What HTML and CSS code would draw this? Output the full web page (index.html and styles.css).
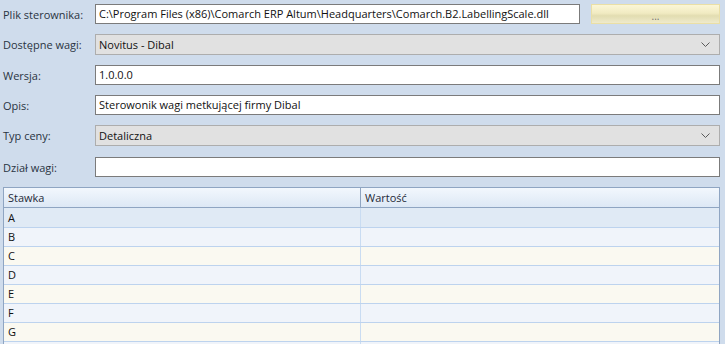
FILE: index.html
```html
<!DOCTYPE html>
<html lang="pl">
<head>
<meta charset="utf-8">
<link rel="stylesheet" href="styles.css">
</head>
<body>
<div class="form">
  <div class="row r1">
    <label class="lbl">Plik sterownika:</label>
    <div class="pair">
      <div class="input file">C:\Program Files (x86)\Comarch ERP Altum\Headquarters\Comarch.B2.LabellingScale.dll</div>
      <div class="btn">...</div>
    </div>
  </div>
  <div class="row r2">
    <label class="lbl">Dostępne wagi:</label>
    <div class="select"><span>Novitus - Dibal</span><svg class="chev" width="9" height="5" viewBox="0 0 9 5"><path d="M0.5 0.5 L4.5 4.5 L8.5 0.5" fill="none" stroke="#5a5a5a" stroke-width="1"/></svg></div>
  </div>
  <div class="row r3">
    <label class="lbl">Wersja:</label>
    <div class="input">1.0.0.0</div>
  </div>
  <div class="row r4">
    <label class="lbl">Opis:</label>
    <div class="input">Sterowonik wagi metkującej firmy Dibal</div>
  </div>
  <div class="row r5">
    <label class="lbl">Typ ceny:</label>
    <div class="select"><span>Detaliczna</span><svg class="chev" width="9" height="5" viewBox="0 0 9 5"><path d="M0.5 0.5 L4.5 4.5 L8.5 0.5" fill="none" stroke="#5a5a5a" stroke-width="1"/></svg></div>
  </div>
  <div class="row r6">
    <label class="lbl">Dział wagi:</label>
    <div class="input"></div>
  </div>
</div>
<div class="grid">
  <div class="ghead">
    <div class="c1">Stawka</div>
    <div class="c2">Wartość</div>
  </div>
  <div class="grow focus"><div class="c1">A</div><div class="c2"></div></div>
  <div class="grow odd"><div class="c1">B</div><div class="c2"></div></div>
  <div class="grow even"><div class="c1">C</div><div class="c2"></div></div>
  <div class="grow odd"><div class="c1">D</div><div class="c2"></div></div>
  <div class="grow even"><div class="c1">E</div><div class="c2"></div></div>
  <div class="grow odd"><div class="c1">F</div><div class="c2"></div></div>
  <div class="grow even"><div class="c1">G</div><div class="c2"></div></div>
  <div class="grow odd"><div class="c1"></div><div class="c2"></div></div>
</div>
</body>
</html>
```
FILE: styles.css
```css
html, body {
  margin: 0;
  padding: 0;
  height: 344px;
  overflow: hidden;
  background: #cfdcec;
}
body {
  font-family: "Open Sans", "Noto Sans", sans-serif;
  font-size: 11px;
  color: #1e1e1e;
}
.form {
  padding: 4px 5px 0 3px;
}
.row {
  display: flex;
  align-items: center;
}
.r1 { height: 20px; margin-bottom: 10px; }
.r2 { height: 21px; margin-bottom: 10px; }
.r3 { height: 20px; margin-bottom: 10px; }
.r4 { height: 20px; margin-bottom: 10px; }
.r5 { height: 21px; margin-bottom: 11px; }
.r6 { height: 20px; margin-bottom: 10px; }
.lbl {
  width: 92px;
  flex: none;
  color: #2a3442;
}
.pair {
  flex: 1;
  display: flex;
  gap: 11px;
  height: 100%;
}
.input {
  flex: 1;
  height: 100%;
  box-sizing: border-box;
  background: #fff;
  border: 1px solid #7b7b7b;
  padding: 0 0 0 3px;
  line-height: 18px;
  white-space: nowrap;
  overflow: hidden;
  color: #111;
}
.file { flex: none; width: 485px; }
.btn {
  width: 129px;
  box-sizing: border-box;
  border: 1px solid #eadfa6;
  background: linear-gradient(#fbf6d6 0%, #f1ebc2 45%, #e2ddb1 60%, #efeacb 100%);
  text-align: center;
  font-size: 10px;
  line-height: 22px;
  color: #6f6f6f;
}
.select {
  flex: 1;
  height: 100%;
  box-sizing: border-box;
  background: #e1e1e1;
  border: 1px solid #adadad;
  padding: 0 9px 0 3px;
  display: flex;
  align-items: center;
  justify-content: space-between;
  color: #111;
}
.grid {
  margin: 0 5px 0 3px;
  border-left: 1px solid #8fa5c2;
  border-right: 1px solid #8fa5c2;
}
.ghead {
  display: flex;
  height: 21px;
  box-sizing: border-box;
  border-top: 1px solid #8fa5c2;
  border-bottom: 1px solid #8fa5c2;
  background: linear-gradient(#f2f7fd, #dde8f5);
  color: #1f2a38;
}
.ghead .c1 {
  width: 357px;
  box-sizing: border-box;
  border-right: 1px solid #8fa5c2;
  padding-left: 4px;
  line-height: 19px;
}
.ghead .c2 {
  flex: 1;
  padding-left: 4px;
  line-height: 19px;
}
.grow {
  display: flex;
  height: 18px;
  border-bottom: 1px solid #bdd3ee;
}
.grow.focus { height: 19px; }
.grow .c1 {
  width: 357px;
  box-sizing: border-box;
  border-right: 1px solid #c9dcf2;
  padding-left: 4px;
  line-height: 18px;
  color: #111;
}
.grow.focus .c1 { line-height: 19px; }
.grow .c2 { flex: 1; }
.focus { background: #e0eaf5; }
.odd { background: #f0f4fa; }
.even { background: #faf9f1; }
```
